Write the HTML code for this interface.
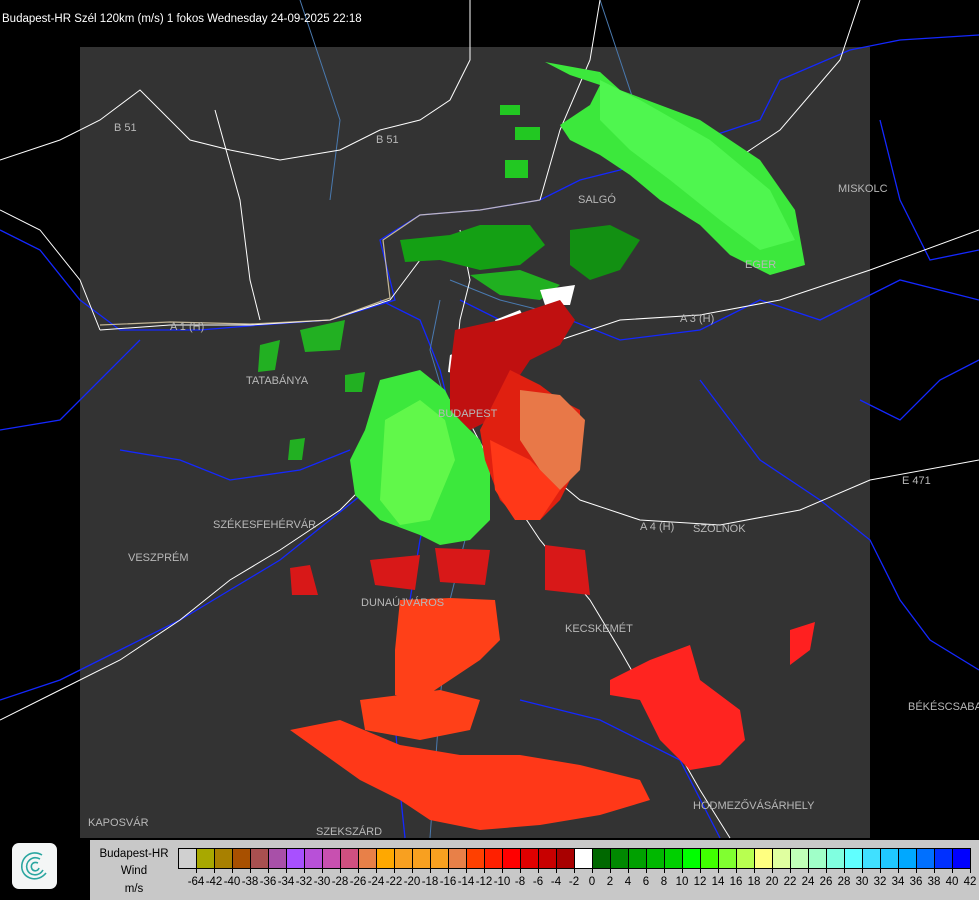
<!DOCTYPE html>
<html><head><meta charset="utf-8"><style>
html,body{margin:0;padding:0;background:#000;width:979px;height:900px;overflow:hidden;font-family:"Liberation Sans",sans-serif}
#t{position:absolute;left:2px;top:13px;color:#fff;font-size:11.5px}
svg{position:absolute;left:0;top:0}
#leg{position:absolute;left:90px;top:840px;width:889px;height:60px;background:#c8c8c8}
#leg .nm{position:absolute;left:0;width:88px;text-align:center;color:#000;font-size:11.5px}
#cells{position:absolute;left:88px;top:8px;display:flex;border:1px solid #000;border-right:none;height:19px}
#cells div{flex:none;width:18px;height:19px;border-right:1px solid #000;box-sizing:border-box}
#labs{position:absolute;left:88px;top:28px;font-size:11.5px;color:#000;white-space:nowrap}
#labs span{position:absolute;transform:translateX(-50%);top:8px}
#labs i{position:absolute;top:0;width:1px;height:5px;background:#000}
#logo{position:absolute;left:12px;top:843px;width:45px;height:46px;background:#f4f6f6;border-radius:7px}
.lb{font-size:11px;fill:#b8b8b8;font-family:"Liberation Sans",sans-serif}
</style></head><body>
<svg width="979" height="900">
<rect x="80" y="47" width="790" height="791" fill="#333"/>
<g fill="none" stroke="#1428ff" stroke-width="1.3">
<path d="M0 230 L40 250 L80 300 L120 330 L200 330 L260 325 L330 320 L395 300 L380 240 L420 215 L480 210 L540 200 L580 180 L620 170 L700 140 L760 120 L780 80 L850 50 L900 40 L979 35"/>
<path d="M0 430 L60 420 L100 380 L140 340"/>
<path d="M380 300 L420 320 L440 370 L450 410 L440 460 L430 500 L420 540 L410 600 L400 660 L395 720 L400 790 L405 838"/>
<path d="M460 300 L520 330 L570 320 L620 340 L700 330 L760 300 L820 320 L860 300 L900 280 L979 300"/>
<path d="M700 380 L730 420 L760 460 L820 500 L870 540 L900 600 L930 640 L979 670"/>
<path d="M520 700 L600 720 L680 760 L720 838"/>
<path d="M0 700 L60 680 L120 650 L180 620 L230 590 L280 560 L330 520 L380 480"/>
<path d="M120 450 L180 460 L230 480 L300 470 L350 450"/>
<path d="M860 400 L900 420 L940 380 L979 360"/>
<path d="M880 120 L900 200 L930 260 L979 250"/>
</g>
<g fill="none" stroke="#4a7ab0" stroke-width="1">
<path d="M440 300 L430 350 L445 400 L460 450 L470 520 L450 600 L440 700 L430 838"/>
<path d="M450 280 L500 300 L540 310"/>
<path d="M600 0 L620 60 L640 120"/>
<path d="M300 0 L320 60 L340 120 L330 200"/>
</g>
<g fill="none" stroke="#fff" stroke-width="1">
<path d="M0 160 L60 140 L100 120 L140 90 L190 140 L230 150 L280 160 L340 150 L380 130 L420 120 L450 100 L470 60 L470 0"/>
<path d="M215 110 L240 200 L250 280 L260 320"/>
<path d="M460 230 L470 280 L460 320 L455 370"/>
<path d="M455 370 L520 360 L560 340 L620 320 L700 315 L780 300 L870 270 L979 230"/>
<path d="M455 390 L520 450 L580 500 L640 520 L720 525 L800 510 L870 480 L979 460"/>
<path d="M455 395 L500 480 L540 540 L590 600 L620 650 L660 720 L700 790 L730 838"/>
<path d="M455 395 L400 450 L340 510 L280 550 L230 580 L180 620 L120 660 L60 690 L0 720"/>
<path d="M100 330 L170 325 L250 325 L330 320 L390 300 L420 260 L450 240"/>
<path d="M0 210 L40 230 L80 280 L100 330"/>
<path d="M540 200 L560 130 L590 60 L600 0"/>
<path d="M680 200 L720 170 L780 130 L840 60 L860 0"/>
</g>
<path d="M100 325 L170 322 L250 324 L330 320 L390 298 L383 240 L420 215 L480 210 L540 200" fill="none" stroke="#e8d8b0" stroke-width="1.2" opacity=".8"/>
<g>
<path d="M545 62 L600 72 L620 90 L700 120 L760 160 L795 210 L805 265 L770 275 L730 255 L700 225 L660 200 L630 175 L600 155 L570 140 L560 125 L590 105 L600 85 L570 75 Z" fill="#3ce83c"/>
<path d="M600 80 L640 100 L710 140 L770 190 L795 240 L760 250 L720 220 L670 180 L630 150 L600 120 Z" fill="#5cff5c" opacity=".6"/>
<path d="M400 240 L450 235 L480 225 L530 225 L545 245 L520 265 L480 270 L440 260 L405 262 Z" fill="#14a014"/>
<path d="M570 230 L610 225 L640 240 L620 270 L590 280 L570 265 Z" fill="#129012"/>
<path d="M470 275 L520 270 L560 285 L540 300 L500 295 Z" fill="#20b020"/>
<path d="M500 105 L520 105 L520 115 L500 115 Z M515 127 L540 127 L540 140 L515 140 Z M505 160 L528 160 L528 178 L505 178 Z" fill="#22c822"/>
<path d="M380 380 L420 370 L445 390 L460 420 L480 440 L490 470 L490 520 L470 540 L440 545 L420 535 L380 520 L355 495 L350 460 L365 430 Z" fill="#3ce83c"/>
<path d="M385 420 L420 400 L445 420 L455 460 L430 520 L400 525 L380 500 Z" fill="#70ff50" opacity=".7"/>
<path d="M260 345 L280 340 L275 370 L258 372 Z M300 330 L345 320 L340 350 L305 352 Z M345 375 L365 372 L362 392 L345 392 Z M290 440 L305 438 L302 460 L288 460 Z" fill="#22b022"/>
<path d="M495 320 L520 310 L530 330 L505 340 Z M540 290 L575 285 L570 305 L545 305 Z M450 355 L465 350 L462 375 L448 372 Z" fill="#fff"/>
<path d="M455 330 L500 320 L530 310 L560 300 L575 320 L560 345 L530 360 L510 390 L490 420 L470 430 L450 410 L450 370 Z" fill="#c01010"/>
<path d="M510 370 L540 385 L560 400 L580 410 L580 450 L570 480 L560 500 L540 520 L520 520 L500 500 L485 460 L480 430 Z" fill="#e02010"/>
<path d="M520 390 L560 395 L585 420 L580 470 L560 490 L540 470 L520 440 Z" fill="#e87848"/>
<path d="M490 440 L530 460 L560 490 L540 520 L515 520 L495 490 Z" fill="#ff3818"/>
<path d="M290 568 L310 565 L318 595 L292 595 Z M370 560 L420 555 L415 590 L375 585 Z M435 548 L490 550 L485 585 L440 582 Z M545 545 L585 550 L590 595 L545 590 Z" fill="#d81818"/>
<path d="M400 600 L450 598 L495 600 L500 640 L480 660 L450 680 L420 700 L395 695 L395 650 Z M360 700 L440 690 L480 700 L470 730 L420 740 L365 730 Z" fill="#ff4018"/>
<path d="M290 730 L340 720 L400 745 L460 755 L520 755 L580 765 L640 780 L650 800 L600 815 L540 825 L480 830 L430 820 L400 800 L360 780 Z" fill="#ff3818"/>
<path d="M610 680 L650 660 L690 645 L700 680 L740 710 L745 740 L720 765 L690 770 L660 740 L640 700 L610 695 Z" fill="#ff2420"/>
<path d="M790 630 L815 622 L810 650 L790 665 Z" fill="#ff2020"/>
</g>
<g class="lb">
<text x="578" y="203">SALGÓ</text><text x="838" y="192">MISKOLC</text><text x="745" y="268">EGER</text>
<text x="246" y="384">TATABÁNYA</text><text x="438" y="417">BUDAPEST</text><text x="213" y="528">SZÉKESFEHÉRVÁR</text>
<text x="128" y="561">VESZPRÉM</text><text x="361" y="606">DUNAÚJVÁROS</text><text x="565" y="632">KECSKEMÉT</text>
<text x="693" y="532">SZOLNOK</text><text x="693" y="809">HÓDMEZŐVÁSÁRHELY</text><text x="88" y="826">KAPOSVÁR</text>
<text x="316" y="835">SZEKSZÁRD</text><text x="908" y="710">BÉKÉSCSABA</text>
<text x="114" y="131">B 51</text><text x="376" y="143">B 51</text><text x="680" y="322">A 3 (H)</text>
<text x="640" y="530">A 4 (H)</text><text x="902" y="484">E 471</text><text x="170" y="330">A 1 (H)</text>
</g>
</svg>
<div id="t">Budapest-HR Szél 120km (m/s) 1 fokos Wednesday 24-09-2025 22:18</div>
<div id="logo"><svg width="45" height="46" viewBox="0 0 45 46"><g fill="none" stroke="#2aa6a0" stroke-width="1.6"><path d="M30 12 C20 6 8 14 10 26 C12 36 26 40 34 30"/><path d="M28 16 C20 12 13 19 15 26 C17 33 27 34 31 27"/><path d="M26 20 C21 18 18 22 20 26 C22 29 26 28 27 25"/></g></svg></div>
<div id="leg">
<div class="nm" style="top:8px">Budapest-HR</div>
<div class="nm" style="top:25px">Wind</div>
<div class="nm" style="top:43px">m/s</div>
<div id="cells">
<div style="background:#d0d0d0"></div><div style="background:#a8a800"></div><div style="background:#a88000"></div><div style="background:#a85000"></div><div style="background:#a85050"></div><div style="background:#a850a8"></div><div style="background:#a850ff"></div><div style="background:#b850d8"></div><div style="background:#c850b0"></div><div style="background:#d05080"></div><div style="background:#e88048"></div><div style="background:#ffa800"></div><div style="background:#f8a020"></div><div style="background:#f8a020"></div><div style="background:#f8a020"></div><div style="background:#e88048"></div><div style="background:#ff4000"></div><div style="background:#ff2000"></div><div style="background:#ff0000"></div><div style="background:#e00000"></div><div style="background:#c80000"></div><div style="background:#a80000"></div><div style="background:#ffffff"></div><div style="background:#006800"></div><div style="background:#008800"></div><div style="background:#00a000"></div><div style="background:#00b800"></div><div style="background:#00d000"></div><div style="background:#00ff00"></div><div style="background:#40ff00"></div><div style="background:#80ff30"></div><div style="background:#b8ff50"></div><div style="background:#ffff80"></div><div style="background:#e0ffa0"></div><div style="background:#c0ffb8"></div><div style="background:#a0ffc8"></div><div style="background:#80ffe0"></div><div style="background:#60ffff"></div><div style="background:#40e0ff"></div><div style="background:#20c8ff"></div><div style="background:#00a8ff"></div><div style="background:#0070ff"></div><div style="background:#0030ff"></div><div style="background:#0000ff"></div>
</div>
<div id="labs">
<i style="left:18px"></i><span style="left:18px">-64</span>
<i style="left:36px"></i><span style="left:36px">-42</span>
<i style="left:54px"></i><span style="left:54px">-40</span>
<i style="left:72px"></i><span style="left:72px">-38</span>
<i style="left:90px"></i><span style="left:90px">-36</span>
<i style="left:108px"></i><span style="left:108px">-34</span>
<i style="left:126px"></i><span style="left:126px">-32</span>
<i style="left:144px"></i><span style="left:144px">-30</span>
<i style="left:162px"></i><span style="left:162px">-28</span>
<i style="left:180px"></i><span style="left:180px">-26</span>
<i style="left:198px"></i><span style="left:198px">-24</span>
<i style="left:216px"></i><span style="left:216px">-22</span>
<i style="left:234px"></i><span style="left:234px">-20</span>
<i style="left:252px"></i><span style="left:252px">-18</span>
<i style="left:270px"></i><span style="left:270px">-16</span>
<i style="left:288px"></i><span style="left:288px">-14</span>
<i style="left:306px"></i><span style="left:306px">-12</span>
<i style="left:324px"></i><span style="left:324px">-10</span>
<i style="left:342px"></i><span style="left:342px">-8</span>
<i style="left:360px"></i><span style="left:360px">-6</span>
<i style="left:378px"></i><span style="left:378px">-4</span>
<i style="left:396px"></i><span style="left:396px">-2</span>
<i style="left:414px"></i><span style="left:414px">0</span>
<i style="left:432px"></i><span style="left:432px">2</span>
<i style="left:450px"></i><span style="left:450px">4</span>
<i style="left:468px"></i><span style="left:468px">6</span>
<i style="left:486px"></i><span style="left:486px">8</span>
<i style="left:504px"></i><span style="left:504px">10</span>
<i style="left:522px"></i><span style="left:522px">12</span>
<i style="left:540px"></i><span style="left:540px">14</span>
<i style="left:558px"></i><span style="left:558px">16</span>
<i style="left:576px"></i><span style="left:576px">18</span>
<i style="left:594px"></i><span style="left:594px">20</span>
<i style="left:612px"></i><span style="left:612px">22</span>
<i style="left:630px"></i><span style="left:630px">24</span>
<i style="left:648px"></i><span style="left:648px">26</span>
<i style="left:666px"></i><span style="left:666px">28</span>
<i style="left:684px"></i><span style="left:684px">30</span>
<i style="left:702px"></i><span style="left:702px">32</span>
<i style="left:720px"></i><span style="left:720px">34</span>
<i style="left:738px"></i><span style="left:738px">36</span>
<i style="left:756px"></i><span style="left:756px">38</span>
<i style="left:774px"></i><span style="left:774px">40</span>
<i style="left:792px"></i><span style="left:792px">42</span>
</div>
</div>
</body></html>
